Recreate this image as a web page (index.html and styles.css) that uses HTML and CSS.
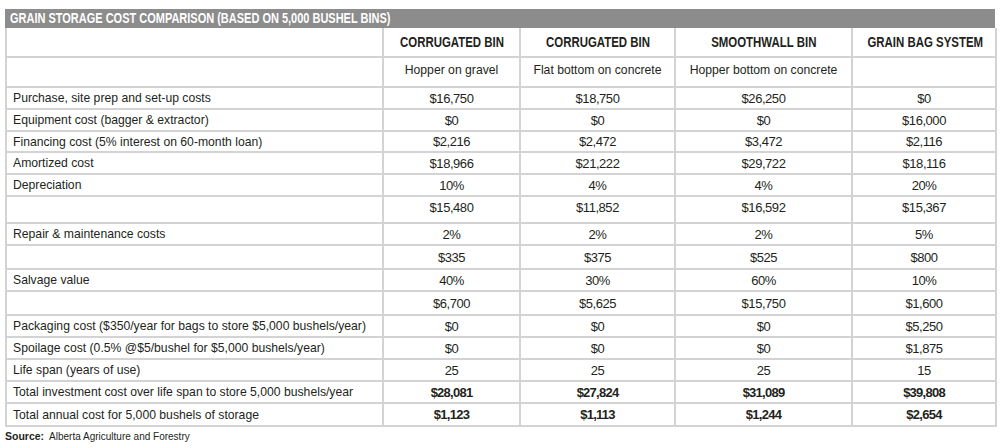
FILE: index.html
```html
<!DOCTYPE html>
<html>
<head>
<meta charset="utf-8">
<link rel="stylesheet" href="styles.css">
</head>
<body>
<div class="wrap">
  <div class="title"><span class="cond-left">GRAIN STORAGE COST COMPARISON (BASED ON 5,000 BUSHEL BINS)</span></div>
  <table class="cost">
    <colgroup>
      <col class="c-label"><col class="c-1"><col class="c-2"><col class="c-3"><col class="c-4">
    </colgroup>
    <tbody>
      <tr class="h1"><td></td><th><span class="cond">CORRUGATED BIN</span></th><th><span class="cond">CORRUGATED BIN</span></th><th><span class="cond">SMOOTHWALL BIN</span></th><th><span class="cond">GRAIN BAG SYSTEM</span></th></tr>
      <tr class="h2"><td></td><td class="sub">Hopper on gravel</td><td class="sub">Flat bottom on concrete</td><td class="sub">Hopper bottom on concrete</td><td class="sub"></td></tr>
      <tr class="r22"><td class="lbl">Purchase, site prep and set-up costs</td><td>$16,750</td><td>$18,750</td><td>$26,250</td><td>$0</td></tr>
      <tr class="r22"><td class="lbl">Equipment cost (bagger &amp; extractor)</td><td>$0</td><td>$0</td><td>$0</td><td>$16,000</td></tr>
      <tr class="r21"><td class="lbl">Financing cost (5% interest on 60-month loan)</td><td>$2,216</td><td>$2,472</td><td>$3,472</td><td>$2,116</td></tr>
      <tr class="r22"><td class="lbl">Amortized cost</td><td>$18,966</td><td>$21,222</td><td>$29,722</td><td>$18,116</td></tr>
      <tr class="r22"><td class="lbl">Depreciation</td><td>10%</td><td>4%</td><td>4%</td><td>20%</td></tr>
      <tr class="r27 top"><td class="lbl"></td><td>$15,480</td><td>$11,852</td><td>$16,592</td><td>$15,367</td></tr>
      <tr class="r22"><td class="lbl">Repair &amp; maintenance costs</td><td>2%</td><td>2%</td><td>2%</td><td>5%</td></tr>
      <tr class="r24"><td class="lbl"></td><td>$335</td><td>$375</td><td>$525</td><td>$800</td></tr>
      <tr class="r22"><td class="lbl">Salvage value</td><td>40%</td><td>30%</td><td>60%</td><td>10%</td></tr>
      <tr class="r24"><td class="lbl"></td><td>$6,700</td><td>$5,625</td><td>$15,750</td><td>$1,600</td></tr>
      <tr class="r22"><td class="lbl">Packaging cost ($350/year for bags to store $5,000 bushels/year)</td><td>$0</td><td>$0</td><td>$0</td><td>$5,250</td></tr>
      <tr class="r22"><td class="lbl">Spoilage cost (0.5% @$5/bushel for $5,000 bushels/year)</td><td>$0</td><td>$0</td><td>$0</td><td>$1,875</td></tr>
      <tr class="r22"><td class="lbl">Life span (years of use)</td><td>25</td><td>25</td><td>25</td><td>15</td></tr>
      <tr class="r22 total"><td class="lbl">Total investment cost over life span to store 5,000 bushels/year</td><td>$28,081</td><td>$27,824</td><td>$31,089</td><td>$39,808</td></tr>
      <tr class="r23 total"><td class="lbl">Total annual cost for 5,000 bushels of storage</td><td>$1,123</td><td>$1,113</td><td>$1,244</td><td>$2,654</td></tr>
    </tbody>
  </table>
  <p class="source"><b>Source:</b>&nbsp; Alberta Agriculture and Forestry</p>
</div>
</body>
</html>
```

FILE: styles.css
```css
html, body {
  margin: 0;
  padding: 0;
  background: #ffffff;
}

.wrap {
  padding: 9px 5px 0 5px;
  width: 990px;
  font-family: "Liberation Sans", Arial, sans-serif;
  color: #231f20;
}

.title {
  height: 19px;
  line-height: 19px;
  background: #8c8c8c;
  color: #ffffff;
  font-weight: bold;
  font-size: 14px;
  padding-left: 5px;
  white-space: nowrap;
  overflow: hidden;
}

.cond-left {
  display: inline-block;
  transform: scaleX(0.785);
  transform-origin: left center;
}

.cond {
  display: inline-block;
  transform: scaleX(0.8);
  transform-origin: center center;
}

.cost {
  width: 990px;
  table-layout: fixed;
  border-collapse: collapse;
}

.c-label { width: 377px; }
.c-1 { width: 137px; }
.c-2 { width: 155px; }
.c-3 { width: 177px; }
.c-4 { width: 144px; }

.cost td, .cost th {
  border: 2px solid #d3d3d3;
  padding: 0;
  text-align: center;
  vertical-align: middle;
  font-size: 13px;
  font-weight: normal;
  letter-spacing: -0.45px;
  white-space: nowrap;
}

.cost tr:first-child td, .cost tr:first-child th {
  border-top: none;
}

.cost th {
  font-weight: bold;
  font-size: 14.3px;
  letter-spacing: 0;
}

.cost td.sub {
  font-size: 12.2px;
  letter-spacing: 0;
  vertical-align: top;
  padding-top: 5px;
}

.cost td.lbl {
  text-align: left;
  padding-left: 6px;
  font-size: 12.2px;
  letter-spacing: 0;
}

.h1 { height: 29px; }
.h2 { height: 30px; }
.r21 { height: 21px; }
.r22 { height: 22px; }
.r23 { height: 23px; }
.r24 { height: 24px; }
.r27 { height: 27px; }

.top td { vertical-align: top; padding-top: 3px; }

.total td { font-weight: bold; letter-spacing: -0.75px; }
.total td.lbl { font-weight: normal; letter-spacing: 0; }

.source {
  margin: 3px 0 0 0;
  font-size: 10px;
  line-height: 13px;
}

.source b {
  font-size: 10.5px;
}
```
